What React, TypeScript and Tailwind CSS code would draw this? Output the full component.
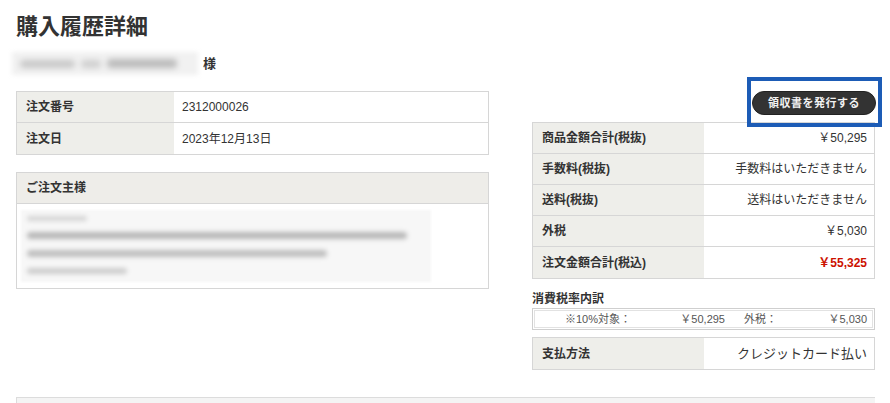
import React from "react";

const font = { fontFamily: '"Liberation Sans", "Noto Sans CJK JP", sans-serif' };

function Blur({ w, h = 7, o = 0.55, ml = 0 }: { w: number; h?: number; o?: number; ml?: number }) {
  return (
    <div
      className="bg-[#6b6b6b] rounded-sm blur-[2px]"
      style={{ width: w, height: h, opacity: o, marginLeft: ml }}
    />
  );
}

function Row({ label, value, last, right, valueClass }: { label: string; value: React.ReactNode; last?: boolean; right?: boolean; valueClass?: string }) {
  return (
    <div className={`flex h-[31px] ${last ? "" : "border-b border-[#d6d6d6]"}`}>
      <div className={`bg-[#eeeeea] flex items-center pl-[9px] text-[12px] font-bold text-[#333] ${right ? "w-[171px]" : "w-[157px]"}`}>
        {label}
      </div>
      <div
        className={`flex-1 flex items-center text-[12px] text-[#333] bg-white ${right ? "justify-end pr-[7px]" : "pl-[8px]"} ${valueClass ?? ""}`}
      >
        {value}
      </div>
    </div>
  );
}

export default function App() {
  return (
    <div className="relative w-[890px] h-[403px] overflow-hidden bg-white text-[#333]" style={font}>
      <div className="pl-4 pr-[15px]">
        <h1 className="pt-[12px] text-[22px] font-bold leading-[30px] text-[#333]">購入履歴詳細</h1>
        <div className="flex items-center mt-[10px] h-[23px] -ml-1">
          <div className="w-[186px] h-[23px] bg-[#f1f1f1] flex items-center gap-[6px] px-[8px] blur-[2px]">
            <Blur w={55} h={8} o={0.3} />
            <Blur w={20} h={8} o={0.25} />
            <Blur w={70} h={9} o={0.4} />
          </div>
          <span className="ml-[5px] text-[13px] font-bold">様</span>
        </div>

        <div className="flex mt-[16px]">
          {/* left column */}
          <div className="w-[473px]">
            <div className="border border-[#d6d6d6]">
              <Row label="注文番号" value="2312000026" />
              <Row label="注文日" value="2023年12月13日" last />
            </div>

            <div className="mt-[17px] border border-[#d6d6d6]">
              <div className="h-[31px] bg-[#eeede9] border-b border-[#d6d6d6] flex items-center pl-[9px] text-[12px] font-bold">
                ご注文主様
              </div>
              <div className="h-[84px] pt-[6px] pl-[4px]">
                <div className="w-[410px] h-[72px] bg-[#f7f7f7] blur-[1px] flex flex-col gap-[11px] pt-[6px] pl-[6px]">
                  <Blur w={60} h={5} o={0.25} />
                  <Blur w={380} h={7} o={0.45} />
                  <Blur w={300} h={7} o={0.4} />
                  <Blur w={100} h={6} o={0.3} />
                </div>
              </div>
            </div>
          </div>

          {/* right column */}
          <div className="w-[343px] ml-[43px]">
            <div className="h-[31px] flex justify-end items-start">
              <button className="h-[24px] w-[124px] -mr-px rounded-full bg-[#333] border border-[#222] text-[#f2f2f2] text-[11px] font-bold tracking-[0.5px] flex items-center justify-center">
                領収書を発行する
              </button>
            </div>
            <div className="border border-[#d6d6d6]">
              <Row right label="商品金額合計(税抜)" value="￥50,295" />
              <Row right label="手数料(税抜)" value="手数料はいただきません" />
              <Row right label="送料(税抜)" value="送料はいただきません" />
              <Row right label="外税" value="￥5,030" />
              <Row right last label="注文金額合計(税込)" value="￥55,325" valueClass="!text-[#cc1100] font-bold" />
            </div>

            <div className="mt-[13px] text-[12px] font-bold leading-[14px]">消費税率内訳</div>
            <div className="mt-[2px] border border-[#cfcfcf] p-px bg-white">
              <div className="h-[18px] border border-[#e2e2e2] flex items-center text-[11px] text-[#555]">
                <div className="w-[96px] text-right">※10%対象：</div>
                <div className="w-[94px] text-right">￥50,295</div>
                <div className="w-[76px] pl-[19px]">外税：</div>
                <div className="flex-1 text-right pr-[5px]">￥5,030</div>
              </div>
            </div>

            <div className="mt-[7px] border border-[#d6d6d6]">
              <Row right last label="支払方法" value={<span className="text-[13px]">クレジットカード払い</span>} />
            </div>
          </div>
        </div>

        <div className="mt-[27px] h-[20px] border-t border-l border-[#dcdcdc] bg-[#f4f4f4]" />
      </div>

      {/* annotation frame */}
      <div className="absolute left-[747px] top-[77px] w-[135px] h-[50px] border-4 border-[#1d5cb6]" />
    </div>
  );
}
